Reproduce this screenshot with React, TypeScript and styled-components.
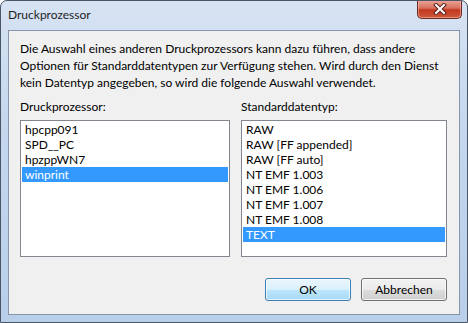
import React from 'react';
import styled, { createGlobalStyle } from 'styled-components';

const GlobalStyle = createGlobalStyle`
  html, body {
    margin: 0;
    padding: 0;
    background: #ffffff;
  }
  body {
    font-family: Lato, "Open Sans", "Noto Sans", sans-serif;
    font-size: 12px;
    color: #000;
  }
`;

const WindowFrame = styled.div`
  width: 468px;
  height: 323px;
  box-sizing: border-box;
  border: 1px solid #4a5566;
  border-radius: 7px 7px 0 0;
  background: linear-gradient(180deg, #d6e3f3 0%, #c4d7ee 40%, #b9cfe9 100%);
  display: flex;
  flex-direction: column;
  overflow: hidden;
`;

const TitleBar = styled.div`
  height: 29px;
  flex-shrink: 0;
  display: flex;
  align-items: flex-start;
  justify-content: space-between;
  padding-left: 7px;
  padding-right: 5px;
`;

const Title = styled.div`
  margin-top: 6px;
  font-size: 12px;
  color: #1e1e1e;
`;

const CloseButton = styled.div`
  width: 45px;
  height: 19px;
  margin-top: -1px;
  box-sizing: border-box;
  border: 1px solid #6b2a22;
  border-top: none;
  border-radius: 0 0 5px 5px;
  background: linear-gradient(180deg, #e9a99b 0%, #d9705e 45%, #c2381f 55%, #cf5a3c 100%);
  box-shadow: inset 0 0 0 1px rgba(255, 200, 190, 0.5);
  display: flex;
  align-items: center;
  justify-content: center;
`;

const Client = styled.div`
  flex: 1;
  margin: 0 7px 7px 7px;
  border: 1px solid #8697ad;
  background: #f0f0f0;
  padding: 9px 12px 13px 11px;
  display: flex;
  flex-direction: column;
`;

const Description = styled.p`
  margin: 0;
  line-height: 17px;
  width: 430px;
`;

const Columns = styled.div`
  display: grid;
  grid-template-columns: 210px 206px;
  column-gap: 11px;
  margin-top: 8px;
`;

const Column = styled.div`
  display: flex;
  flex-direction: column;
`;

const Label = styled.div`
  line-height: 15px;
  margin-bottom: 6px;
`;

const ListBox = styled.div`
  height: 137px;
  box-sizing: border-box;
  border: 1px solid #828790;
  background: #ffffff;
  padding: 1px;
`;

const ListItem = styled.div<{ $selected?: boolean }>`
  height: 15px;
  line-height: 15px;
  padding-left: 3px;
  white-space: nowrap;
  background: ${p => (p.$selected ? '#3399ff' : 'transparent')};
  color: ${p => (p.$selected ? '#ffffff' : '#000000')};
`;

const ButtonRow = styled.div`
  margin-top: auto;
  display: flex;
  justify-content: flex-end;
  gap: 10px;
`;

const Button = styled.div<{ $default?: boolean }>`
  width: 86px;
  height: 23px;
  box-sizing: border-box;
  border: 1px solid ${p => (p.$default ? '#3c7fb1' : '#707070')};
  border-radius: 3px;
  display: flex;
  align-items: center;
  justify-content: center;
  color: #000;
  background: ${p =>
    p.$default
      ? 'linear-gradient(180deg, #eaf6fd 0%, #d9f0fc 50%, #bee6fd 51%, #a7d9f5 100%)'
      : 'linear-gradient(180deg, #f2f2f2 0%, #ebebeb 50%, #dddddd 51%, #cfcfcf 100%)'};
  box-shadow: inset 0 0 0 1px rgba(255, 255, 255, 0.7);
`;

const processors = ['hpcpp091', 'SPD__PC', 'hpzppWN7', 'winprint'];
const dataTypes = [
  'RAW',
  'RAW [FF appended]',
  'RAW [FF auto]',
  'NT EMF 1.003',
  'NT EMF 1.006',
  'NT EMF 1.007',
  'NT EMF 1.008',
  'TEXT',
];

const CloseGlyph = () => (
  <svg width="14" height="12" viewBox="0 0 14 12">
    <path d="M3 2 L11 10 M11 2 L3 10" stroke="#5a2019" strokeWidth="4" strokeLinecap="square" />
    <path d="M3 2 L11 10 M11 2 L3 10" stroke="#ffffff" strokeWidth="2" strokeLinecap="square" />
  </svg>
);

const App = () => {
  return <>
    <GlobalStyle />
    <WindowFrame>
      <TitleBar>
        <Title>Druckprozessor</Title>
        <CloseButton><CloseGlyph /></CloseButton>
      </TitleBar>
      <Client>
        <Description>
          Die Auswahl eines anderen Druckprozessors kann dazu führen, dass andere
          Optionen für Standarddatentypen zur Verfügung stehen. Wird durch den Dienst
          kein Datentyp angegeben, so wird die folgende Auswahl verwendet.
        </Description>
        <Columns>
          <Column>
            <Label>Druckprozessor:</Label>
            <ListBox>
              {processors.map(name => (
                <ListItem key={name} $selected={name === 'winprint'}>{name}</ListItem>
              ))}
            </ListBox>
          </Column>
          <Column>
            <Label>Standarddatentyp:</Label>
            <ListBox>
              {dataTypes.map(name => (
                <ListItem key={name} $selected={name === 'TEXT'}>{name}</ListItem>
              ))}
            </ListBox>
          </Column>
        </Columns>
        <ButtonRow>
          <Button $default>OK</Button>
          <Button>Abbrechen</Button>
        </ButtonRow>
      </Client>
    </WindowFrame>
  </>;
};

export default App;
